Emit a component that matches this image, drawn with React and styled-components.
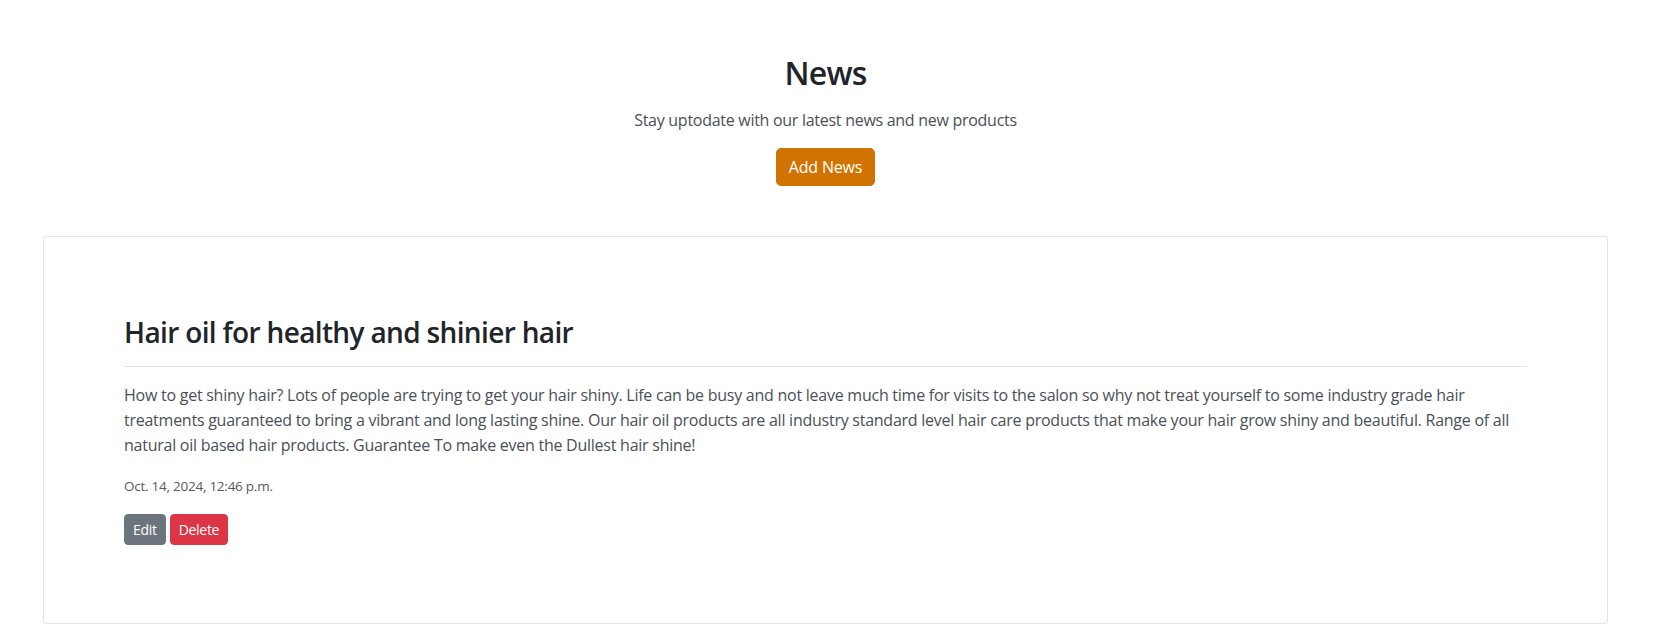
import React from "react";
import styled, { createGlobalStyle } from "styled-components";

const GlobalStyle = createGlobalStyle`
  *, *::before, *::after { box-sizing: border-box; }
  body {
    margin: 0;
    background: #ffffff;
    font-family: "Open Sans", "Noto Sans", sans-serif;
    color: #212529;
    -webkit-font-smoothing: antialiased;
  }
`;

const Page = styled.main`
  padding: 54px 68px 40px 43px;
`;

const Header = styled.header`
  display: flex;
  flex-direction: column;
  align-items: center;
  text-align: center;
`;

const Title = styled.h2`
  margin: 0 0 16px;
  font-size: 32px;
  font-weight: 600;
  line-height: 1.2;
  letter-spacing: -0.8px;
  color: #212529;
`;

const Lead = styled.p`
  margin: 0 0 16px;
  font-size: 16px;
  line-height: 24px;
  letter-spacing: -0.28px;
  color: #495057;
`;

const Button = styled.button`
  display: inline-flex;
  align-items: center;
  justify-content: center;
  border: 1px solid ${(p) => p.$bg};
  background: ${(p) => p.$bg};
  color: #ffffff;
  font-family: inherit;
  font-size: ${(p) => (p.$small ? "14px" : "16px")};
  line-height: ${(p) => (p.$small ? "21px" : "24px")};
  padding: ${(p) => (p.$small ? "4px 8px" : "6px 12px")};
  border-radius: ${(p) => (p.$small ? "4px" : "5px")};
  letter-spacing: ${(p) => (p.$small ? "-0.3px" : "-0.2px")};
  cursor: pointer;
`;

const Card = styled.article`
  margin-top: 50px;
  border: 1px solid #e3e5e8;
  border-radius: 3px;
  padding: 79px 80px 78px;
`;

const PostTitle = styled.h3`
  margin: 0;
  font-size: 28px;
  font-weight: 600;
  line-height: 1.2;
  letter-spacing: -0.65px;
  color: #212529;
`;

const Divider = styled.hr`
  margin: 16px 0;
  border: 0;
  border-top: 1px solid #dfe1e4;
`;

const Body = styled.p`
  margin: 0 0 16px;
  font-size: 16px;
  line-height: 25px;
  letter-spacing: -0.25px;
  color: #495057;
`;

const Meta = styled.p`
  margin: 0 0 16px;
  font-size: 13.5px;
  line-height: 24px;
  letter-spacing: -0.25px;
  color: #555b61;
`;

const Actions = styled.div`
  display: flex;
  gap: 4px;
`;

export default function App() {
  return (
    <>
      <GlobalStyle />
      <Page>
        <Header>
          <Title>News</Title>
          <Lead>Stay uptodate with our latest news and new products</Lead>
          <Button $bg="#d17300">Add News</Button>
        </Header>
        <Card>
          <PostTitle>Hair oil for healthy and shinier hair</PostTitle>
          <Divider />
          <Body>
            How to get shiny hair? Lots of people are trying to get your hair shiny. Life can be busy and not leave
            much time for visits to the salon so why not treat yourself to some industry grade hair treatments
            guaranteed to bring a vibrant and long lasting shine. Our hair oil products are all industry standard
            level hair care products that make your hair grow shiny and beautiful. Range of all natural oil based hair
            products. Guarantee To make even the Dullest hair shine!
          </Body>
          <Meta>Oct. 14, 2024, 12:46 p.m.</Meta>
          <Actions>
            <Button $small $bg="#6c757d">Edit</Button>
            <Button $small $bg="#dc3545">Delete</Button>
          </Actions>
        </Card>
      </Page>
    </>
  );
}
